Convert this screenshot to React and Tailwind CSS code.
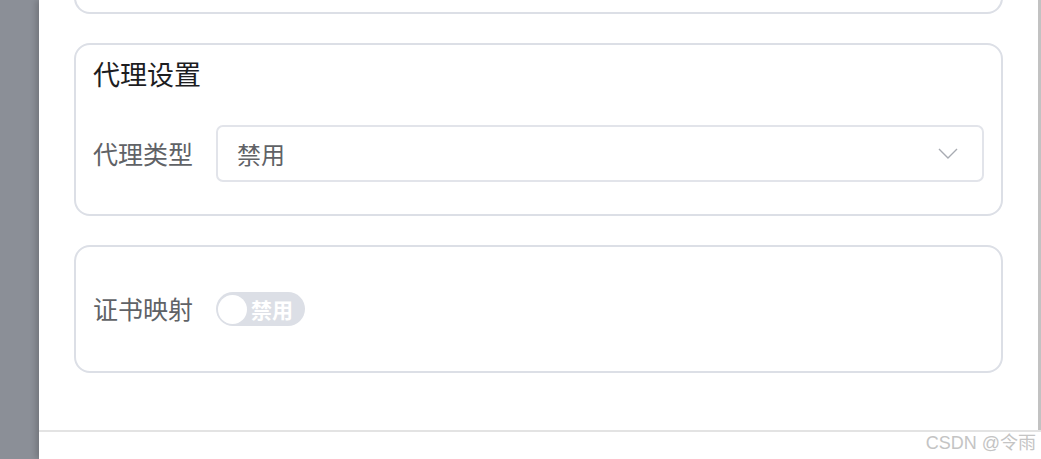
import React from "react";

const font = { fontFamily: '"Noto Sans CJK SC", "Noto Sans", sans-serif' };

const Card = ({ className = "", children }) => (
  <div className={`rounded-[16px] border-2 border-[#dcdfe6] bg-white ${className}`}>
    {children}
  </div>
);

const Chevron = () => (
  <svg width="20" height="11" viewBox="0 0 20 11" fill="none">
    <path d="M1 1l9 9 9-9" stroke="#a8abb2" strokeWidth="1.4" />
  </svg>
);

export default function App() {
  return (
    <div
      className="flex h-[459px] w-[1041px] overflow-hidden bg-[#8b8f97]"
      style={font}
    >
      {/* mask strip */}
      <div className="w-[39px] shrink-0" />

      {/* drawer */}
      <div className="flex flex-1 flex-col bg-white shadow-[-3px_0_6px_rgba(0,0,0,0.18)]">
        <div className="flex h-[430px] overflow-hidden">
          <div className="flex flex-1 flex-col gap-[29px] px-[35px]">
            <Card className="mt-[-40px] h-[54px] shrink-0" />

            <Card className="shrink-0 px-[17px] pt-[12px] pb-[32px]">
              <h3 className="text-[27px] leading-[34px] text-[#1d1d1f]">代理设置</h3>
              <div className="mt-[34px] flex items-center">
                <label className="w-[123px] shrink-0 text-[25px] text-[#606266]">代理类型</label>
                <div className="flex h-[57px] flex-1 items-center justify-between rounded-[7px] border-2 border-[#e2e4ea] pl-[19px] pr-[24px]">
                  <span className="text-[24px] text-[#606266]">禁用</span>
                  <Chevron />
                </div>
              </div>
            </Card>

            <Card className="flex h-[128px] shrink-0 items-center px-[17px]">
              <label className="w-[123px] shrink-0 text-[25px] text-[#606266]">证书映射</label>
              <div className="flex h-[34px] w-[89px] items-center rounded-full bg-[#dcdfe6] px-[2px]">
                <span className="h-[29px] w-[29px] rounded-full bg-white" />
                <span className="ml-[4px] text-[21px] font-bold leading-none text-white">禁用</span>
              </div>
            </Card>
          </div>
          <div className="w-[3px] shrink-0 bg-[#c2c2c2]" />
        </div>

        {/* footer */}
        <div className="flex flex-1 items-start justify-end border-t-2 border-[#e3e3e3] pr-[5px]">
          <span
            className="text-[18px] leading-[22px] text-[#c4c4c4]"
            style={{ fontFamily: '"Liberation Sans", "Noto Sans CJK SC", sans-serif' }}
          >
            CSDN @令雨
          </span>
        </div>
      </div>
    </div>
  );
}
